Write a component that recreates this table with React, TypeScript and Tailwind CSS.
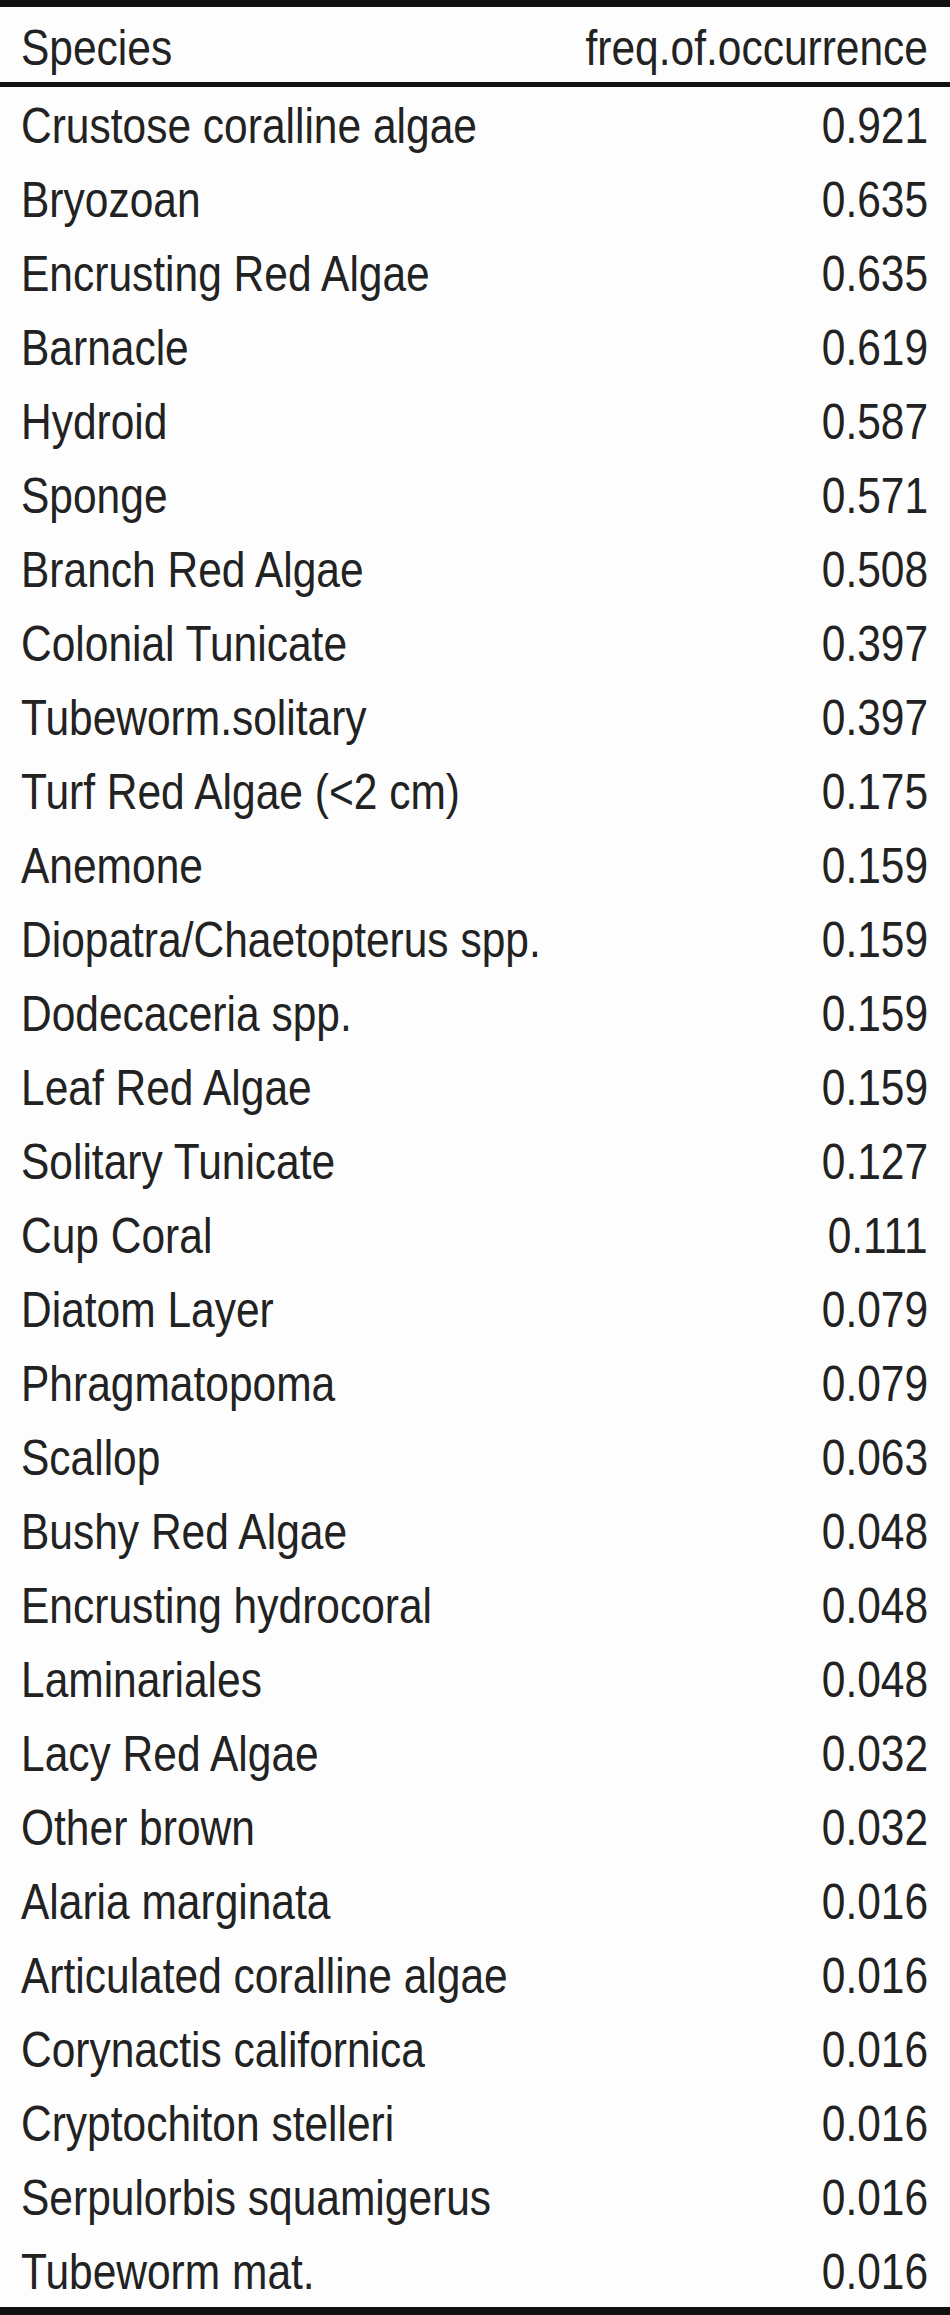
import React from 'react';

const rows: [string, string][] = [
  ['Crustose coralline algae', '0.921'],
  ['Bryozoan', '0.635'],
  ['Encrusting Red Algae', '0.635'],
  ['Barnacle', '0.619'],
  ['Hydroid', '0.587'],
  ['Sponge', '0.571'],
  ['Branch Red Algae', '0.508'],
  ['Colonial Tunicate', '0.397'],
  ['Tubeworm.solitary', '0.397'],
  ['Turf Red Algae (<2 cm)', '0.175'],
  ['Anemone', '0.159'],
  ['Diopatra/Chaetopterus spp.', '0.159'],
  ['Dodecaceria spp.', '0.159'],
  ['Leaf Red Algae', '0.159'],
  ['Solitary Tunicate', '0.127'],
  ['Cup Coral', '0.111'],
  ['Diatom Layer', '0.079'],
  ['Phragmatopoma', '0.079'],
  ['Scallop', '0.063'],
  ['Bushy Red Algae', '0.048'],
  ['Encrusting hydrocoral', '0.048'],
  ['Laminariales', '0.048'],
  ['Lacy Red Algae', '0.032'],
  ['Other brown', '0.032'],
  ['Alaria marginata', '0.016'],
  ['Articulated coralline algae', '0.016'],
  ['Corynactis californica', '0.016'],
  ['Cryptochiton stelleri', '0.016'],
  ['Serpulorbis squamigerus', '0.016'],
  ['Tubeworm mat.', '0.016'],
];

// no narrow face installed, so squeeze Liberation Sans horizontally
const Cell = ({ children, right }: { children: React.ReactNode; right?: boolean }) => (
  <span className={`inline-block whitespace-nowrap scale-x-[0.85] ${right ? 'origin-right' : 'origin-left'}`}>
    {children}
  </span>
);

const App = () => {
  return (
    <div className="w-[950px] bg-[#fdfdfd] text-[#222222] font-['Liberation_Sans_Narrow','Liberation_Sans',sans-serif] text-[50px] leading-none">
      <div className="border-t-[7px] border-b-[5px] border-[#111111] flex justify-between items-end pl-[21px] pr-[22px] h-[87px] pb-[9px]">
        <Cell>Species</Cell>
        <Cell right>freq.of.occurrence</Cell>
      </div>
      <div className="border-b-[8px] border-[#111111]">
        {rows.map(([name, freq]) => (
          <div key={name} className="flex justify-between items-end pl-[21px] pr-[22px] h-[74px] pb-[10px]">
            <Cell>{name}</Cell>
            <Cell right>{freq}</Cell>
          </div>
        ))}
      </div>
    </div>
  );
};

export default App;
